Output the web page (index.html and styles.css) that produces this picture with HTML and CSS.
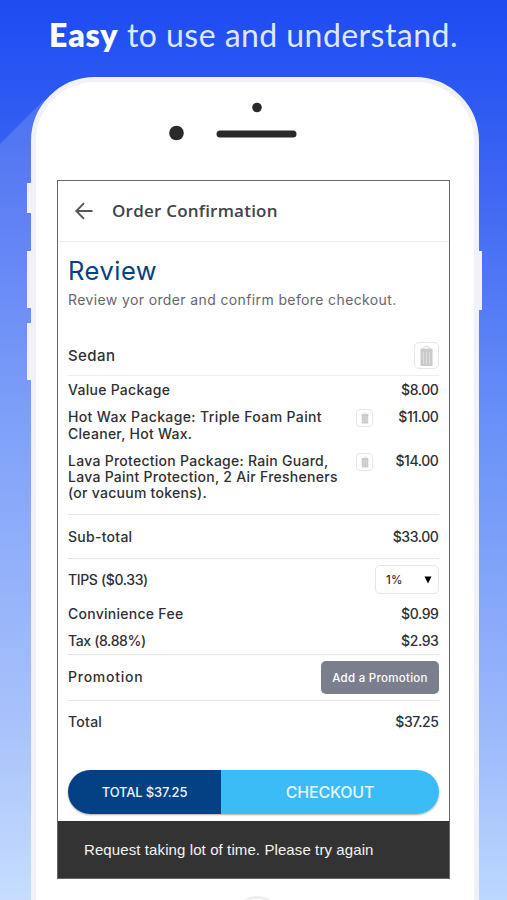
FILE: index.html
```html
<!DOCTYPE html>
<html lang="en">
<head>
<meta charset="utf-8">
<title>Order Confirmation</title>
<link rel="stylesheet" href="styles.css">
</head>
<body>
<svg class="icon-defs" aria-hidden="true">
  <symbol id="trash" viewBox="0 0 14 22">
    <path d="M3.500 4 Q4.500 1.200 7 1.200 Q9.500 1.200 10.500 4" fill="none" stroke="#d6d6d6" stroke-width="1"/>
    <path d="M1 3.600 H13 V5.500 H1Z" fill="#cbcbcb"/>
    <rect x="1" y="5" width="12" height="16" rx="1" fill="#cacaca"/>
    <path d="M4 7V19M7 7V19M10 7V19" stroke="#dedede" stroke-width="1"/>
  </symbol>
</svg>
<main class="promo">
  <svg class="shade" viewBox="0 0 60 900" aria-hidden="true"><path d="M0 144L43 101L60 101V900H0Z" fill="#fff" fill-opacity=".15"/></svg>
  <h1 class="headline"><b>Easy</b> to use and understand.</h1>
  <div class="phone">
    <i class="key key-mute"></i><i class="key key-up"></i><i class="key key-down"></i><i class="key key-power"></i>
    <div class="shell">
      <div class="face">
        <svg width="130" height="40" viewBox="0 0 130 40" aria-hidden="true">
          <circle cx="90" cy="6.500" r="4.800" fill="#292929"/>
          <circle cx="9.500" cy="32" r="7.300" fill="#292929"/>
          <rect x="49.500" y="29.500" width="80" height="7" rx="3.500" fill="#292929"/>
        </svg>
      </div>
      <section class="screen">
        <header class="bar">
          <svg width="20" height="20" viewBox="0 0 20 20" aria-hidden="true"><path d="M18.500 10H2.500M10 2.200L2.300 10L10 17.800" fill="none" stroke="#55565a" stroke-width="1.900"/></svg>
          <h2 class="bar-title">Order Confirmation</h2>
        </header>
        <div class="content">
          <h3 class="title">Review</h3>
          <p class="lead">Review yor order and confirm before checkout.</p>
          <div class="row vehicle"><span class="sedan">Sedan</span><button class="bin bin-large" aria-label="Remove"><svg width="15" height="22"><use href="#trash"/></svg></button></div>
          <div class="items">
            <div class="item"><span>Value Package</span><span class="price">$8.00</span></div>
            <div class="item"><span class="name"><span class="wide">Hot Wax Package: Triple Foam Paint</span><br>Cleaner, Hot Wax.</span><button class="bin bin-small" aria-label="Remove"><svg width="8" height="12"><use href="#trash"/></svg></button><span class="price">$11.00</span></div>
            <div class="item"><span class="name">Lava Protection Package: Rain Guard,<br>Lava Paint Protection, 2 Air Fresheners<br>(or vacuum tokens).</span><button class="bin bin-small" aria-label="Remove"><svg width="8" height="12"><use href="#trash"/></svg></button><span class="price">$14.00</span></div>
          </div>
          <div class="row subtotal"><span>Sub-total</span><span class="price">$33.00</span></div>
          <div class="fees">
            <div class="row tips"><span class="tight">TIPS ($0.33)</span><span class="select"><span>1%</span><svg width="8" height="8" viewBox="0 0 8 8"><path d="M.5 .5H7.500L4 7.500Z"/></svg></span></div>
            <div class="row fee"><span>Convinience Fee</span><span class="price">$0.99</span></div>
            <div class="row tax"><span class="tight">Tax (8.88%)</span><span class="price">$2.93</span></div>
          </div>
          <div class="row promotion"><span class="promo-label">Promotion</span><button class="add">Add a Promotion</button></div>
          <div class="row total"><span>Total</span><span class="price">$37.25</span></div>
          <div class="checkout"><span class="sum">TOTAL $37.25</span><span class="go">CHECKOUT</span></div>
        </div>
        <div class="toast">Request taking lot of time. Please try again</div>
      </section>
      <div class="home"></div>
    </div>
  </div>
</main>
</body>
</html>
```
FILE: styles.css
```css
* { box-sizing: border-box; }
body { margin: 0; }
h1, h2, h3, p { margin: 0; font-weight: 400; }
button { border: 0; padding: 0; background: none; font: inherit; }
.icon-defs { position: absolute; width: 0; height: 0; }
.promo {
  position: relative; width: 507px; height: 900px; overflow: hidden;
  background: linear-gradient(#1d4bf2 0, #2c58f3 90px, #3f67f3 190px, #6890f8 420px, #9dbafb 740px, #bcd8ff 900px);
}
.shade { position: absolute; left: 0; top: 0; width: 60px; height: 900px; }
.headline {
  position: relative; height: 77px; padding-top: 13px; text-align: center;
  font-family: Lato, sans-serif; font-size: 32px; line-height: 44px; font-weight: 400; letter-spacing: .45px; color: #dfe8ff; white-space: nowrap;
}
.headline b { font-weight: 800; color: #fff; letter-spacing: .8px; }
.phone { position: relative; width: 448px; height: 900px; margin-left: 31px; }
.key { position: absolute; left: -4px; width: 5px; background: #f1f2f6; }
.key-mute { top: 106px; height: 30px; }
.key-up { top: 174px; height: 57px; }
.key-down { top: 246px; height: 57px; }
.key-power { top: 174px; height: 59px; left: 446px; }
.shell {
  position: relative; height: 900px; background: #fff; border: 5px solid #f1f2f8; border-radius: 64px;
  display: flex; flex-direction: column;
}
.face { height: 98px; padding: 19px 0 0 131px; }
.screen {
  width: 393px; height: 699px; margin-left: 21px; border: 1.500px solid #68686a;
  display: flex; flex-direction: column; background: #fff; flex: none;
}
.bar { height: 61px; flex: none; display: flex; align-items: center; padding-left: 16px; gap: 18px; border-bottom: 1px solid #ededed; }
.bar-title { font: 600 17px/24px "Open Sans", sans-serif; letter-spacing: .22px; color: #424347; }
.content {
  flex: 1; padding: 14px 10px 0 10px; font-family: Inter, sans-serif; font-weight: 450;
  font-size: 14px; line-height: 16px; letter-spacing: .27px; color: #303033; white-space: nowrap;
}
.title { font-size: 25.500px; line-height: 30px; color: #044181; font-weight: 400; letter-spacing: .5px; }
.lead { margin-top: 5px; line-height: 18px; color: #66676b; letter-spacing: .38px; }
.row { display: flex; justify-content: space-between; align-items: center; }
.vehicle { height: 39px; margin-top: 28px; border-bottom: 1px solid #ededed; }
.sedan { font-size: 15px; letter-spacing: .4px; }
.wide { letter-spacing: .37px; }
.tight { letter-spacing: -.36px; }
.promo-label { letter-spacing: .75px; padding-bottom: 2px; }
.bin { display: flex; align-items: center; justify-content: center; border: 1px solid #e7e7e7; flex: none; }
.bin-large { width: 25px; height: 27px; border-radius: 5px; margin-bottom: 1px; }
.bin-small { width: 17px; height: 18px; border-radius: 4px; margin-right: 10px; }
.items { height: 139px; padding-top: 6px; border-bottom: 1px solid #e5e5e5; display: flex; flex-direction: column; gap: 11px; }
.item { display: flex; justify-content: space-between; line-height: 16.300px; }
.name { width: 288px; flex: none; }
.item .price { flex: 1; }
.price { text-align: right; letter-spacing: -.4px; padding-right: .5px; }
.subtotal { height: 44px; border-bottom: 1px solid #e5e5e5; }
.fees { height: 96px; border-bottom: 1px solid #e5e5e5; }
.tips { height: 41px; }
.select {
  width: 64px; height: 29px; border: 1px solid #e6e6e6; border-radius: 5px; padding: 0 6px 0 10px;
  display: flex; align-items: center; justify-content: space-between; font-size: 11.500px;
}
.fee, .tax { height: 27px; }
.promotion { height: 46px; border-bottom: 1px solid #e5e5e5; }
.add { width: 118px; height: 33px; border-radius: 5px; background: #7a7e8d; color: #fff; font-size: 11.500px; letter-spacing: .28px; }
.total { height: 42px; }
.checkout {
  display: flex; height: 44px; margin-top: 27px; border-radius: 22px; overflow: hidden; color: #e9f5ff;
  align-items: stretch; box-shadow: 0 1px 2px #00000055;
}
.checkout span { display: flex; align-items: center; justify-content: center; }
.sum { width: 153px; background: #034184; font-size: 13px; letter-spacing: -.15px; }
.go { flex: 1; background: #3bbcf6; font-size: 16px; letter-spacing: -.2px; }
.toast { height: 57px; flex: none; padding-left: 26px; background: #333; color: #f4f4f4; font: 15px/57px "Liberation Sans", sans-serif; letter-spacing: .1px; }
.home { width: 50px; height: 50px; flex: none; margin: 17px 0 0 196px; border: 3px solid #efefef; border-radius: 50%; }
```
